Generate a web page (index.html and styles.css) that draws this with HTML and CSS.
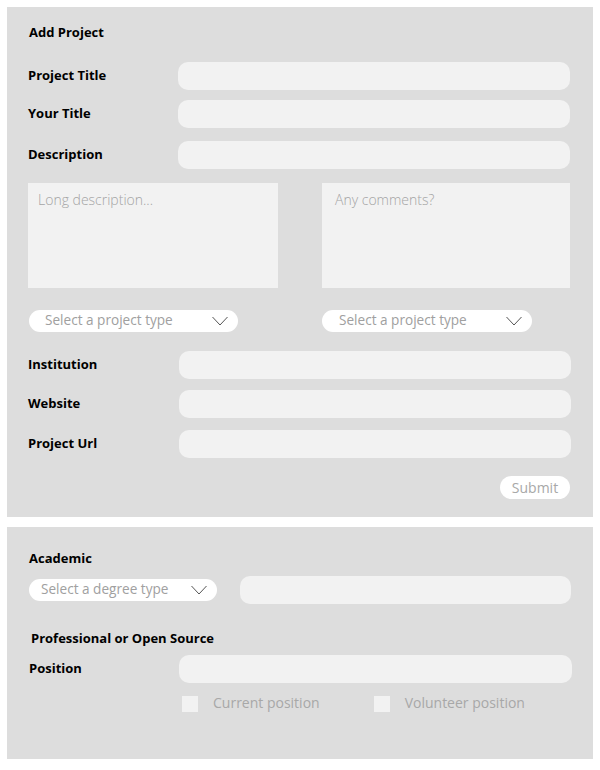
FILE: index.html
```html
<!DOCTYPE html>
<html>
<head>
<meta charset="utf-8">
<link rel="stylesheet" href="styles.css">
</head>
<body>
<div class="page">
  <section class="panel panel-project">
    <h2 class="title">Add Project</h2>
    <div class="row row-1"><label class="label">Project Title</label><input class="field" type="text"></div>
    <div class="row row-2"><label class="label">Your Title</label><input class="field" type="text"></div>
    <div class="row row-3"><label class="label">Description</label><input class="field" type="text"></div>
    <div class="areas">
      <textarea class="area area-left" placeholder="Long description..."></textarea>
      <textarea class="area area-right" placeholder="Any comments?"></textarea>
    </div>
    <div class="selects">
      <div class="select select-left"><span class="select-text">Select a project type</span><svg class="chev" width="16" height="10" viewBox="0 0 16 10"><path d="M0.5 1 L8 9 L15.5 1" fill="none" stroke="#555" stroke-width="1"/></svg></div>
      <div class="select select-right"><span class="select-text">Select a project type</span><svg class="chev" width="16" height="10" viewBox="0 0 16 10"><path d="M0.5 1 L8 9 L15.5 1" fill="none" stroke="#555" stroke-width="1"/></svg></div>
    </div>
    <div class="row row-4"><label class="label">Institution</label><input class="field" type="text"></div>
    <div class="row row-5"><label class="label">Website</label><input class="field" type="text"></div>
    <div class="row row-6"><label class="label">Project Url</label><input class="field" type="text"></div>
    <div class="actions"><button class="submit" type="button">Submit</button></div>
  </section>
  <section class="panel panel-exp">
    <h3 class="sub sub-academic">Academic</h3>
    <div class="degree-row">
      <div class="select select-degree"><span class="select-text">Select a degree type</span><svg class="chev" width="16" height="10" viewBox="0 0 16 10"><path d="M0.5 1 L8 9 L15.5 1" fill="none" stroke="#555" stroke-width="1"/></svg></div>
      <input class="field field-degree" type="text">
    </div>
    <h3 class="sub sub-pro">Professional or Open Source</h3>
    <div class="row row-pos"><label class="label">Position</label><input class="field" type="text"></div>
    <div class="checks">
      <span class="check"><span class="box"></span><span class="check-text">Current position</span></span>
      <span class="check check-vol"><span class="box"></span><span class="check-text">Volunteer position</span></span>
    </div>
  </section>
</div>
</body>
</html>
```
FILE: styles.css
```css
* { box-sizing: border-box; }
html, body { margin: 0; padding: 0; background: #ffffff; }
body { font-family: "Open Sans", "Noto Sans", sans-serif; color: #000; }
.page { padding: 7px; width: 600px; }
.panel { background: #dddddd; width: 586px; }
.panel-project { padding: 15px 23px 18px 21px; height: 510px; }
.panel-exp { margin-top: 10px; padding: 21px 22px 0 22px; height: 232px; }

.title { margin: 0; font-size: 13px; font-weight: 700; line-height: 20px; padding-left: 1px; }
.row { display: flex; align-items: center; height: 28px; }
.label { width: 150px; flex: none; font-size: 13px; font-weight: 700; line-height: 18px; padding-bottom: 2px; }
.field { flex: 1; height: 28px; border: none; outline: none; border-radius: 10px; background: #f2f2f2; margin: 0; padding: 0 10px; }
.row-1 { margin-top: 20px; }
.row-2 { margin-top: 10px; }
.row-3 { margin-top: 13px; }
.row-4 { margin-top: 19px; }
.row-5 { margin-top: 11px; }
.row-6 { margin-top: 12px; }
.row-4 .field, .row-5 .field, .row-6 .field { margin-left: 1px; margin-right: -1px; }

.areas { display: flex; justify-content: space-between; margin-top: 14px; }
.area { height: 105px; border: none; outline: none; resize: none; background: #f2f2f2; margin: 0; padding: 7px 10px; font-family: "Open Sans", sans-serif; font-size: 14px; font-weight: 300; color: #333; }
.area-left { width: 250px; }
.area-right { width: 248px; padding-left: 13px; }
.area::placeholder { color: #a4a4a4; }

.selects { display: flex; justify-content: space-between; margin-top: 22px; padding-left: 1px; padding-right: 38px; }
.select { display: flex; align-items: center; justify-content: space-between; height: 22px; border-radius: 11px; background: #ffffff; padding: 0 10px 0 16px; }
.select-left { width: 209px; }
.select-right { width: 210px; padding-left: 17px; }
.select-text { font-size: 13.6px; font-weight: 400; color: #a0a0a0; white-space: nowrap; line-height: 18px; padding-bottom: 2px; }
.chev { flex: none; display: block; }

.actions { display: flex; justify-content: flex-end; margin-top: 18px; }
.submit { width: 70px; height: 23px; border: none; border-radius: 12px; background: #ffffff; font-family: "Open Sans", sans-serif; font-size: 14px; color: #a8a8a8; padding: 0; line-height: 18px; }

.sub { margin: 0; font-size: 13px; font-weight: 700; line-height: 20px; }
.degree-row { display: flex; align-items: center; margin-top: 8px; height: 28px; }
.select-degree { width: 188px; flex: none; padding-left: 12px; }
.field-degree { margin-left: 23px; }
.sub-pro { margin-top: 24px; padding-left: 2px; }
.row-pos { margin-top: 7px; }
.row-pos .field { margin-right: -1px; }

.checks { display: flex; align-items: center; margin-top: 13px; padding-left: 153px; height: 16px; }
.check { display: flex; align-items: center; }
.check-vol { margin-left: 54px; }
.box { width: 16px; height: 16px; background: #f2f2f2; flex: none; }
.check-text { margin-left: 15px; font-size: 14px; color: #a8a8a8; white-space: nowrap; line-height: 16px; padding-bottom: 3px; }
```
